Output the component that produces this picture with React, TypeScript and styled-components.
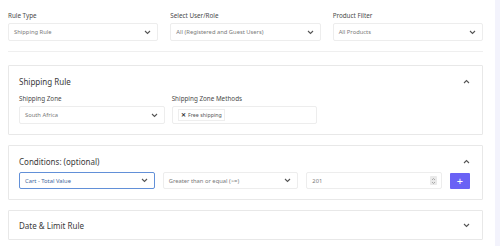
import { createGlobalStyle, styled } from 'styled-components';

const GlobalStyle = createGlobalStyle`
    html, body {
        margin: 0;
        padding: 0;
        background: #ffffff;
    }
    body {
        font-family: 'Noto Sans', 'Open Sans', sans-serif;
        color: #333;
    }
`;

function Chevron({ up }: { up?: boolean }) {
    return (
        <svg width="7" height="5" viewBox="0 0 7 5">
            <polyline
                points={up ? '1,4 3.5,1.5 6,4' : '1,1 3.5,3.5 6,1'}
                fill="none"
                stroke="#555"
                strokeWidth="1.1"
            />
        </svg>
    );
}

function Select({ value, active }: { value: string; active?: boolean }) {
    return (
        <Field $active={active}>
            <span>{value}</span>
            <Chevron />
        </Field>
    );
}

export default function App() {
    return (
        <>
            <GlobalStyle />
            <Page>
                <Main>
                    <TopRow>
                        <Col>
                            <Label>Rule Type</Label>
                            <Select value="Shipping Rule" />
                        </Col>
                        <Col>
                            <Label>Select User/Role</Label>
                            <Select value="All (Registered and Guest Users)" />
                        </Col>
                        <Col>
                            <Label>Product Filter</Label>
                            <Select value="All Products" />
                        </Col>
                    </TopRow>
                    <Divider />

                    <Cards>
                        <Card>
                            <CardHead>
                                <CardTitle>Shipping Rule</CardTitle>
                                <Chevron up />
                            </CardHead>
                            <ZoneGrid>
                                <Col>
                                    <Label>Shipping Zone</Label>
                                    <Select value="South Africa" />
                                </Col>
                                <Col>
                                    <Label>Shipping Zone Methods</Label>
                                    <Field>
                                        <Tag>
                                            <b>✕</b> Free shipping
                                        </Tag>
                                    </Field>
                                </Col>
                            </ZoneGrid>
                        </Card>

                        <Card>
                            <CardHead>
                                <CardTitle>Conditions: (optional)</CardTitle>
                                <Chevron up />
                            </CardHead>
                            <CondRow>
                                <Select value="Cart - Total Value" active />
                                <Select value="Greater than or equal (>=)" />
                                <Field>
                                    <span>201</span>
                                    <Spinner>
                                        <svg width="5" height="8" viewBox="0 0 5 8">
                                            <polyline points="1,3 2.5,1.5 4,3" fill="none" stroke="#999" strokeWidth="0.8" />
                                            <polyline points="1,5 2.5,6.5 4,5" fill="none" stroke="#999" strokeWidth="0.8" />
                                        </svg>
                                    </Spinner>
                                </Field>
                                <AddButton>+</AddButton>
                            </CondRow>
                        </Card>

                        <Card $collapsed>
                            <CardHead>
                                <CardTitle>Date &amp; Limit Rule</CardTitle>
                                <Chevron />
                            </CardHead>
                        </Card>
                    </Cards>
                </Main>
                <Side />
            </Page>
        </>
    );
}

const Page = styled.div`
    display: flex;
    width: 500px;
    height: 246px;
    overflow: hidden;
`;

const Main = styled.div`
    width: 475px;
    padding: 11px 12px 0 8px;
`;

const Side = styled.div`
    flex: 1;
    background: #f3f3fc;
`;

const TopRow = styled.div`
    display: grid;
    grid-template-columns: repeat(3, 1fr);
    column-gap: 12px;
`;

const Col = styled.div`
    display: flex;
    flex-direction: column;
`;

const Label = styled.div`
    font-size: 6.3px;
    line-height: 9px;
    color: #4a4a4a;
    margin-bottom: 3px;
`;

const Field = styled.div<{ $active?: boolean }>`
    height: 16px;
    border: 1px solid ${(p) => (p.$active ? '#6290d8' : '#ededed')};
    border-radius: 2px;
    background: #fff;
    display: flex;
    align-items: center;
    justify-content: space-between;
    padding: 0 6px 0 5px;
    font-size: 5.8px;
    color: ${(p) => (p.$active ? '#44679e' : '#7a7a7a')};
    white-space: nowrap;
    overflow: hidden;
`;

const Divider = styled.div`
    height: 1px;
    background: #efefef;
    margin: 10px 0 13px;
`;

const Cards = styled.div`
    display: flex;
    flex-direction: column;
    gap: 10px;
`;

const Card = styled.div<{ $collapsed?: boolean }>`
    border: 1px solid #e8e8e8;
    border-radius: 1px;
    padding: ${(p) => (p.$collapsed ? '8px 12px 8px 10px' : '9px 12px 10px 10px')};
    display: flex;
    flex-direction: column;
`;

const CardHead = styled.div`
    display: flex;
    align-items: center;
    justify-content: space-between;
    height: 12px;
`;

const CardTitle = styled.div`
    font-size: 8px;
    color: #3a3a3a;
`;

const ZoneGrid = styled.div`
    display: grid;
    grid-template-columns: repeat(3, 1fr);
    column-gap: 7px;
    margin-top: 7px;
`;

const Tag = styled.span`
    font-size: 5.3px;
    color: #555;
    border: 1px solid #eee;
    padding: 1px 2px;
    b {
        font-size: 5.8px;
        margin-right: 1px;
        color: #333;
    }
`;

const CondRow = styled.div`
    display: grid;
    grid-template-columns: 1fr 1fr 1fr 20px;
    column-gap: 8px;
    align-items: center;
    margin-top: 5px;
    ${Field} {
        height: 15px;
    }
`;

const Spinner = styled.span`
    display: flex;
    align-items: center;
    justify-content: center;
    width: 7px;
    height: 9px;
    background: #e9e9e9;
    border-radius: 1px;
    margin-right: -2px;
`;

const AddButton = styled.button`
    width: 20px;
    height: 16px;
    border: none;
    border-radius: 1px;
    background: #6a62f5;
    color: #fff;
    font-size: 11px;
    line-height: 1;
    padding: 0;
    font-family: 'Noto Sans', sans-serif;
`;
